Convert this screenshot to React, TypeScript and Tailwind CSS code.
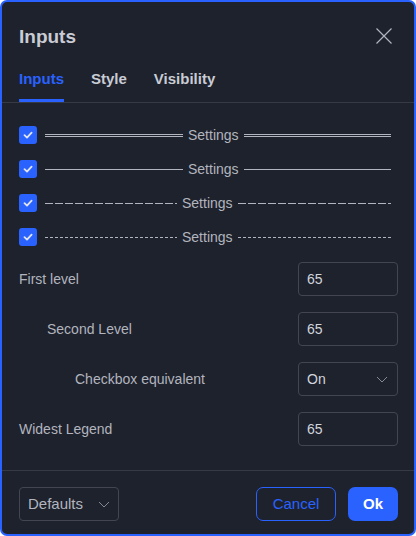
import React from 'react';

const FONT = { fontFamily: '"Liberation Sans", Arial, sans-serif' };

function Check() {
  return (
    <div className="w-[18px] h-[18px] rounded-[3px] bg-[#2962ff] flex items-center justify-center shrink-0">
      <svg width="12" height="12" viewBox="0 0 12 12" fill="none">
        <path d="M2.5 6.2 L5 8.6 L9.6 3.6" stroke="#e0e3eb" strokeWidth="1.8" strokeLinecap="round" strokeLinejoin="round" />
      </svg>
    </div>
  );
}

function Chevron() {
  return (
    <svg width="12" height="7" viewBox="0 0 12 7" fill="none">
      <path d="M1 1 L6 6 L11 1" stroke="#868993" strokeWidth="1" />
    </svg>
  );
}

const LINES: Record<string, string> = {
  double: 'border-t-[3px] border-double border-[#b2b5be]',
  solid: 'border-t border-[#b2b5be]',
  long: 'h-px bg-[repeating-linear-gradient(90deg,#b2b5be_0_8px,transparent_8px_10px)]',
  short: 'h-px bg-[repeating-linear-gradient(90deg,#b2b5be_0_3px,transparent_3px_5px)]',
};

const DIVIDERS = [
  { kind: 'double', left: 'w-[138px]' },
  { kind: 'solid', left: 'w-[138px]' },
  { kind: 'long', left: 'w-[132px]' },
  { kind: 'short', left: 'w-[132px]' },
];

const FIELDS = [
  { label: 'First level', indent: 'pl-0', value: '65' },
  { label: 'Second Level', indent: 'pl-[28px]', value: '65' },
  { label: 'Checkbox equivalent', indent: 'pl-[56px]', value: 'On', select: true },
  { label: 'Widest Legend', indent: 'pl-0', value: '65' },
];

export default function App() {
  return (
    <div style={FONT} className="w-[416px] h-[536px] bg-[#1e222d] border-2 border-[#2962ff] rounded-[7px] flex flex-col overflow-hidden">
      {/* Header */}
      <div className="h-[68px] shrink-0 flex items-center justify-between pl-[17px] pr-[22px]">
        <h1 className="text-[19px] font-bold text-[#c9ccd4] leading-none">Inputs</h1>
        <svg width="16" height="16" viewBox="0 0 16 16" fill="none">
          <path d="M0.5 0.5 L15.5 15.5 M15.5 0.5 L0.5 15.5" stroke="#b2b5be" strokeWidth="1.2" />
        </svg>
      </div>

      {/* Tabs */}
      <div className="h-[33px] shrink-0 flex gap-[27px] pl-[17px] border-b border-[#363a45]">
        <div className="text-[15px] font-bold text-[#2962ff] leading-[18px] pb-[11px] border-b-[3px] border-[#2962ff]">Inputs</div>
        <div className="text-[15px] font-bold text-[#c9ccd4] leading-[18px]">Style</div>
        <div className="text-[15px] font-bold text-[#c9ccd4] leading-[18px]">Visibility</div>
      </div>

      {/* Body */}
      <div className="flex-1 pt-[15px] pl-[17px] pr-[16px]">
        {DIVIDERS.map((d, i) => (
          <div key={i} className="h-[34px] flex items-center pr-[7px]">
            <Check />
            <div className="ml-[8px] flex-1 flex items-center">
              <div className={`${d.left} ${LINES[d.kind]}`} />
              <span className="px-[5px] text-[14px] text-[#b2b5be] leading-none">Settings</span>
              <div className={`flex-1 ${LINES[d.kind]}`} />
            </div>
          </div>
        ))}

        {FIELDS.map((f) => (
          <div key={f.label} className="h-[50px] flex items-center justify-between">
            <span className={`${f.indent} text-[14px] text-[#b2b5be]`}>{f.label}</span>
            <div className="w-[100px] h-[34px] border border-[#434651] rounded-[4px] flex items-center justify-between pl-[8px] pr-[9px] text-[14px] text-[#d1d4dc]">
              <span>{f.value}</span>
              {f.select && <Chevron />}
            </div>
          </div>
        ))}
      </div>

      {/* Footer */}
      <div className="h-[64px] shrink-0 border-t border-[#363a45] flex items-start justify-between pt-[16px] pl-[17px] pr-[16px]">
        <div className="w-[100px] h-[34px] border border-[#434651] rounded-[4px] flex items-center justify-between pl-[8px] pr-[8px] text-[15px] text-[#b2b5be]">
          <span>Defaults</span>
          <Chevron />
        </div>
        <div className="flex gap-[12px]">
          <button className="w-[80px] h-[34px] border border-[#2962ff] rounded-[7px] text-[15px] text-[#2962ff]">Cancel</button>
          <button className="w-[50px] h-[34px] bg-[#2962ff] rounded-[7px] text-[15px] font-bold text-white">Ok</button>
        </div>
      </div>
    </div>
  );
}
